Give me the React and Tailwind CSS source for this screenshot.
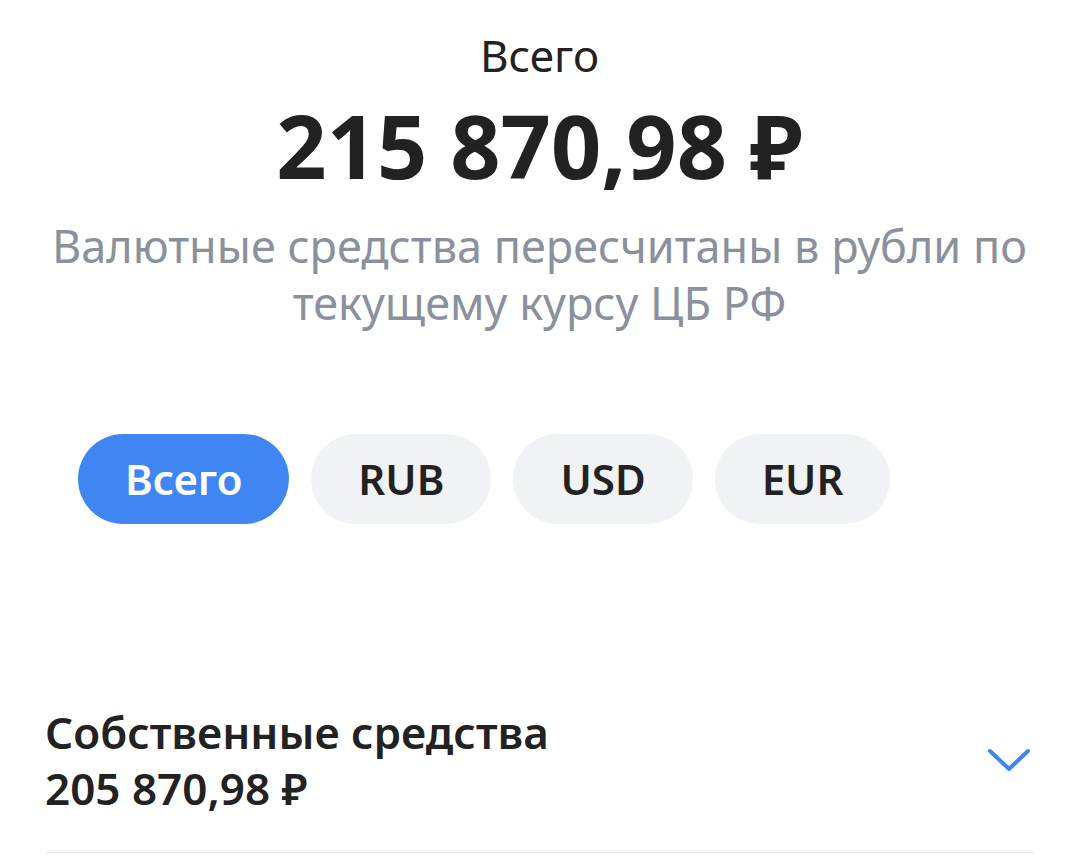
import React from "react";

const Chip = ({ label, active }) => (
  <button
    className={`h-[90px] rounded-full px-[47px] text-[42px] font-semibold leading-none ${
      active ? "bg-[#3f86f2] text-white" : "bg-[#f1f2f5] text-[#222222]"
    }`}
  >
    {label}
  </button>
);

const App = () => {
  return (
    <div
      className="w-[1079px] h-[862px] overflow-hidden bg-white text-[#222222]"
      style={{ fontFamily: '"Noto Sans", "Open Sans", sans-serif' }}
    >
      {/* итог */}
      <div className="flex flex-col items-center pt-[26px]">
        <div className="text-[44px] leading-[58px]">Всего</div>
        <div className="mt-[6px] text-[88px] font-bold leading-[110px]">
          215 870,98 ₽
        </div>
        <p className="mt-[17px] px-[30px] text-center text-[45px] leading-[57px] text-[#8a919c]">
          Валютные средства пересчитаны в рубли по
          <br />
          текущему курсу ЦБ РФ
        </p>
      </div>

      {/* валюты */}
      <div className="mt-[103px] flex gap-[22px] pl-[78px]">
        <Chip label="Всего" active />
        <Chip label="RUB" />
        <Chip label="USD" />
        <Chip label="EUR" />
      </div>

      {/* собственные средства */}
      <div className="mt-[180px] px-[45px]">
        <div className="flex items-center justify-between pb-[36px] border-b border-[#e4e5e8]">
          <div className="flex flex-col">
            <span className="text-[44px] font-semibold leading-[56px]">Собственные средства</span>
            <span className="text-[44px] font-semibold leading-[56px]">205 870,98 ₽</span>
          </div>
          <svg width="46" height="30" viewBox="0 0 46 30" className="mr-[2px]">
            <path d="M4 6 L23 24 L42 6" fill="none" stroke="#3f86f2" strokeWidth="4" strokeLinecap="round" strokeLinejoin="round" />
          </svg>
        </div>
      </div>
    </div>
  );
};

export default App;
